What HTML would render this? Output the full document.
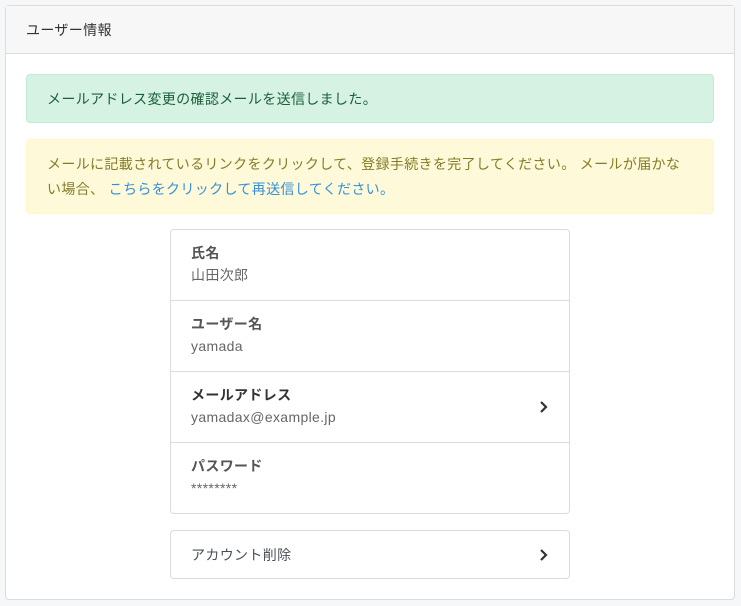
<!DOCTYPE html>
<html><head><meta charset="utf-8"><style>
*{box-sizing:border-box;margin:0;padding:0}
body{width:741px;height:606px;background:#f6f7f9;font-family:"Liberation Sans","Noto Sans CJK JP",sans-serif;font-size:14px;color:#495057;position:relative;overflow:hidden;letter-spacing:0.35px}
.card{position:absolute;left:5px;top:5px;width:730px;height:595px;background:#fff;border:1px solid #dcdcdc;border-radius:4px}
.hd{height:48px;background:#f7f7f7;border-bottom:1px solid #dcdcdc;padding:15px 20px;font-size:14px;color:#333;line-height:18px}
.a1{position:absolute;left:20px;top:68px;width:688px;height:49px;background:#d5f2e3;border:1px solid #c2ebd4;border-radius:4px;padding:15px 20px;line-height:18px;color:#1b5e3b}
.a2{position:absolute;left:20px;top:133px;width:688px;height:75px;background:#fef9d8;border:1px solid #fdf6c7;border-radius:4px;padding:12px 20px;line-height:25px;color:#857b26}
.a2 a{color:#3490dc;text-decoration:none}
.list{position:absolute;left:164px;top:223px;width:400px;border:1px solid #dcdcdc;border-radius:4px}
.row{height:71px;border-bottom:1px solid #dcdcdc;padding:14px 20px;position:relative}
.row:last-child{border-bottom:none;height:70px}
.l{font-weight:bold;font-size:14px;line-height:18px;color:#555}
.v{font-size:14px;line-height:18px;margin-top:4px;color:#666}
.chev{position:absolute;right:20px;top:50%;margin-top:-7px}
.del{position:absolute;left:164px;top:524px;width:400px;height:49px;border:1px solid #dcdcdc;border-radius:4px;padding:15px 20px;line-height:18px}
</style></head><body>
<div class="card">
<div class="hd">ユーザー情報</div>
<div class="a1">メールアドレス変更の確認メールを送信しました。</div>
<div class="a2">メールに記載されているリンクをクリックして、登録手続きを完了してください。 メールが届かな<br>い場合、 <a>こちらをクリックして再送信してください。</a></div>
<div class="list">
<div class="row"><div class="l">氏名</div><div class="v">山田次郎</div></div>
<div class="row"><div class="l">ユーザー名</div><div class="v">yamada</div></div>
<div class="row"><div class="l" style="color:#333">メールアドレス</div><div class="v">yamadax@example.jp</div><svg class="chev" width="10" height="14" viewBox="0 0 10 14"><path d="M2 2l5 5-5 5" fill="none" stroke="#333" stroke-width="2.2"/></svg></div>
<div class="row"><div class="l">パスワード</div><div class="v">********</div></div>
</div>
<div class="del">アカウント削除<svg class="chev" width="10" height="14" viewBox="0 0 10 14"><path d="M2 2l5 5-5 5" fill="none" stroke="#333" stroke-width="2.2"/></svg></div>
</div>
</body></html>
